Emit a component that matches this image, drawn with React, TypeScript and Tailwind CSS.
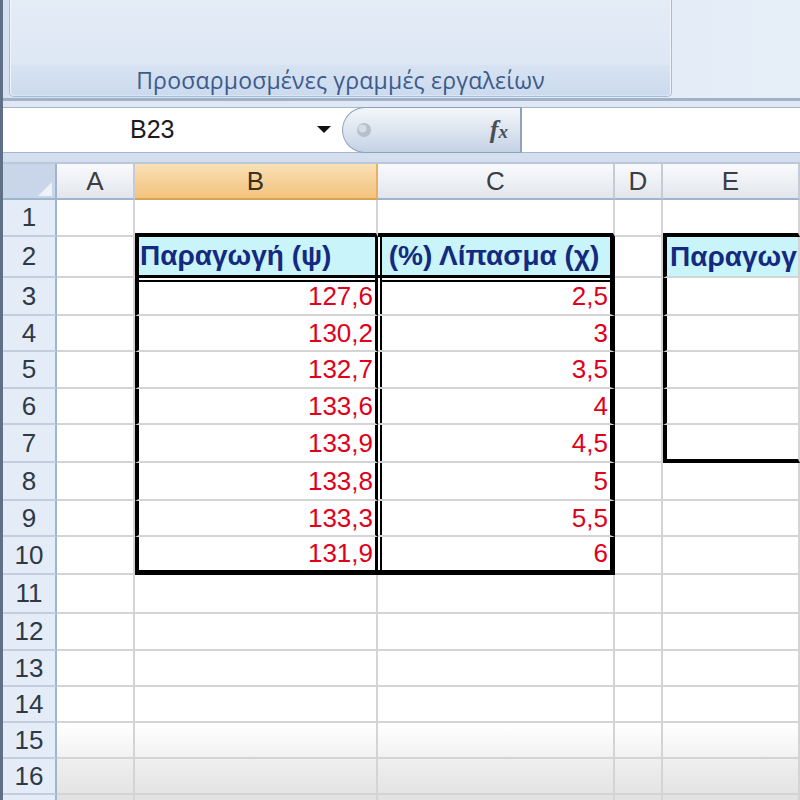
import React from 'react';

type Col = { key: string; w: string };

const COLS: Col[] = [
  { key: 'A', w: 'w-[78px]' },
  { key: 'B', w: 'w-[243px]' },
  { key: 'C', w: 'w-[237px]' },
  { key: 'D', w: 'w-[48px]' },
  { key: 'E', w: 'w-[137px]' },
];

// row heights for rows 1..16
const ROW_H = [
  'h-[37px]', 'h-[41px]', 'h-[38px]', 'h-[36px]', 'h-[37px]', 'h-[36px]', 'h-[38px]', 'h-[38px]',
  'h-[36px]', 'h-[38px]', 'h-[39px]', 'h-[37px]', 'h-[36px]', 'h-[36px]', 'h-[36px]', 'h-[36px]',
];

const production = ['127,6', '130,2', '132,7', '133,6', '133,9', '133,8', '133,3', '131,9'];
const fertilizer = ['2,5', '3', '3,5', '4', '4,5', '5', '5,5', '6'];

function cellClass(col: string, row: number) {
  const t1 = (col === 'B' || col === 'C') && row >= 2 && row <= 10;
  const t2 = col === 'E' && row >= 2 && row <= 7;
  const c: string[] = ['flex items-center whitespace-nowrap overflow-hidden'];

  // right edge
  if (t1 && col === 'B') c.push('border-r-[3px] border-r-black');
  else if (t1 && col === 'C') c.push('border-r-[5px] border-r-black');
  else c.push('border-r-2 border-r-[#d4d4d4]');

  // bottom edge
  if ((col === 'B' || col === 'C') && row === 1) c.push('border-b-4 border-b-black');
  else if ((col === 'B' || col === 'C') && row === 2) c.push('border-b-[3px] border-b-black');
  else if ((col === 'B' || col === 'C') && row === 10) c.push('border-b-[5px] border-b-black');
  else if (col === 'E' && (row === 1 || row === 7)) c.push('border-b-4 border-b-black');
  else c.push('border-b-2 border-b-[#d4d4d4]');

  // left edge of the boxed tables
  if ((t1 && col === 'B') || t2) c.push('border-l-4 border-l-black');

  // second line of the double rules (gap + line)
  if (t1 && col === 'C' && row === 3) c.push('shadow-[inset_2px_0_0_#fff,inset_4px_0_0_#000,inset_0_2px_0_#fff,inset_0_4px_0_#000]');
  else if (t1 && col === 'C') c.push('shadow-[inset_2px_0_0_#fff,inset_4px_0_0_#000]');
  else if (t1 && col === 'B' && row === 3) c.push('shadow-[inset_0_2px_0_#fff,inset_0_4px_0_#000]');

  if (row === 2 && (col === 'B' || col === 'C' || col === 'E')) c.push('bg-[#c9f4f9]');
  else if (row === 15) c.push('bg-linear-to-b from-white to-[#f2f2f2]');
  else if (row >= 16) c.push('bg-linear-to-b from-[#efefef] to-[#e4e4e4]');
  else c.push('bg-white');

  return c.join(' ');
}

function CellText({ col, row }: { col: string; row: number }) {
  if (row === 2 && col === 'B')
    return <span className="pl-[1px] text-[28px] font-bold text-[#142a80]">Παραγωγή (ψ)</span>;
  if (row === 2 && col === 'C')
    return <span className="w-full text-center text-[28px] font-bold text-[#142a80]">(%) Λίπασμα (χ)</span>;
  if (row === 2 && col === 'E')
    return <span className="pl-[3px] text-[28px] font-bold text-[#142a80]">Παραγωγ</span>;
  if (row >= 3 && row <= 10 && col === 'B')
    return <span className="w-full text-right pr-[2px] text-[26px] text-[#e0001b]">{production[row - 3]}</span>;
  if (row >= 3 && row <= 10 && col === 'C')
    return <span className="w-full text-right pr-[2px] text-[26px] text-[#e0001b]">{fertilizer[row - 3]}</span>;
  return null;
}

function Ribbon() {
  return (
    <div className="h-[101px] flex border-b-[3px] border-[#a1b2c8] bg-linear-to-r from-[#d6e2f1] to-[#e6eef8]">
      <div className="ml-[6px] w-[663px] h-[97px] flex flex-col justify-end rounded-b-[5px] border border-t-0 border-[#a9bbd3] bg-linear-to-b from-[#e4ecf6] to-[#dae5f3] shadow-[inset_1px_0_0_#f2f6fb,inset_-1px_0_0_#f2f6fb]">
        <div className="h-[30px] mx-[1px] mb-[1px] rounded-b-[4px] flex items-center justify-center bg-linear-to-b from-[#d7e3f2] to-[#cbdaee] font-['Open_Sans',sans-serif] text-[23px] tracking-[0.2px] text-[#3d5a8b]">
          Προσαρμοσμένες γραμμές εργαλείων
        </div>
      </div>
      <div className="flex-1" />
    </div>
  );
}

function FormulaBar() {
  return (
    <div className="h-[63px] pt-[6px] border-b-2 border-[#b9c8db] bg-linear-to-b from-[#dfe8f4] to-[#d2deee]">
      <div className="h-[46px] flex border-y border-[#a6b6cb] bg-white">
        <div className="w-[339px] flex items-center">
          <span className="pl-[127px] text-[25px] text-[#1b1b1b]">B23</span>
          <svg className="ml-auto mr-[11px]" width="14" height="8" viewBox="0 0 14 8">
            <polygon points="0,0 14,0 7,7" fill="#111" />
          </svg>
        </div>
        <div className="w-[180px] -my-px flex items-center rounded-l-[24px] border border-r-2 border-[#8ea2bc] bg-linear-to-b from-[#f3f6fa] via-[#dde5ef] to-[#c4d2e6]">
          <svg className="ml-[12px]" width="18" height="18" viewBox="0 0 18 18">
            <circle cx="9" cy="9" r="7" fill="#b6bfca" />
            <circle cx="7.5" cy="7.5" r="4" fill="#d7dde5" />
          </svg>
          <span className="ml-auto mr-[12px] italic font-['Liberation_Serif',serif] text-[#4a4f57] leading-none">
            <span className="text-[26px] font-bold">f</span>
            <span className="text-[19px] font-bold">x</span>
          </span>
        </div>
        <div className="flex-1 bg-white" />
      </div>
    </div>
  );
}

function ColumnHeaders() {
  return (
    <div className="flex h-[36px]">
      <div className="w-[54px] flex items-end justify-end border-r-2 border-b-2 border-[#9fb5ce] bg-[#c9d6ea] pr-[3px] pb-[2px]">
        <svg width="14" height="14" viewBox="0 0 14 14">
          <polygon points="14,0 14,14 0,14" fill="#eef2f8" />
        </svg>
      </div>
      {COLS.map((c) =>
        c.key === 'B' ? (
          <div
            key={c.key}
            className={`${c.w} flex items-center justify-center border-r-2 border-r-[#e9b060] border-b-2 border-b-[#d7a453] bg-linear-to-b from-[#fae0b5] to-[#f3c37d] text-[26px] text-[#3a3122]`}
          >
            {c.key}
          </div>
        ) : (
          <div
            key={c.key}
            className={`${c.w} flex items-center justify-center border-r-2 border-r-[#c6ccd5] border-b-2 border-b-[#9fb5ce] bg-linear-to-b from-[#f9fafc] to-[#e2e6ec] text-[26px] text-[#3a3d42]`}
          >
            {c.key}
          </div>
        )
      )}
    </div>
  );
}

export default function App() {
  const rows = ROW_H.map((_, i) => i + 1);

  return (
    <div className="w-[800px] h-[800px] overflow-hidden bg-white border-l-[3px] border-[#5f6f86] font-['Liberation_Sans',Arial,sans-serif]">
      <Ribbon />
      <FormulaBar />
      <ColumnHeaders />
      {rows.map((r) => (
        <div key={r} className={`flex ${ROW_H[r - 1]}`}>
          <div className="w-[54px] flex items-center justify-center border-r-2 border-r-[#9fb5ce] border-b-2 border-b-[#c2cedd] bg-[#e4ecf7] text-[26px] text-[#2e3947]">
            {r}
          </div>
          {COLS.map((c) => (
            <div key={c.key} className={`${c.w} ${cellClass(c.key, r)}`}>
              <CellText col={c.key} row={r} />
            </div>
          ))}
        </div>
      ))}
      {/* the next row peeks in under row 16 */}
      <div className="flex h-[10px]">
        <div className="w-[54px] border-r-2 border-r-[#9fb5ce] bg-[#e4ecf7]" />
        {COLS.map((c) => (
          <div key={c.key} className={`${c.w} border-r-2 border-r-[#d4d4d4] bg-[#e2e2e2]`} />
        ))}
      </div>
    </div>
  );
}
